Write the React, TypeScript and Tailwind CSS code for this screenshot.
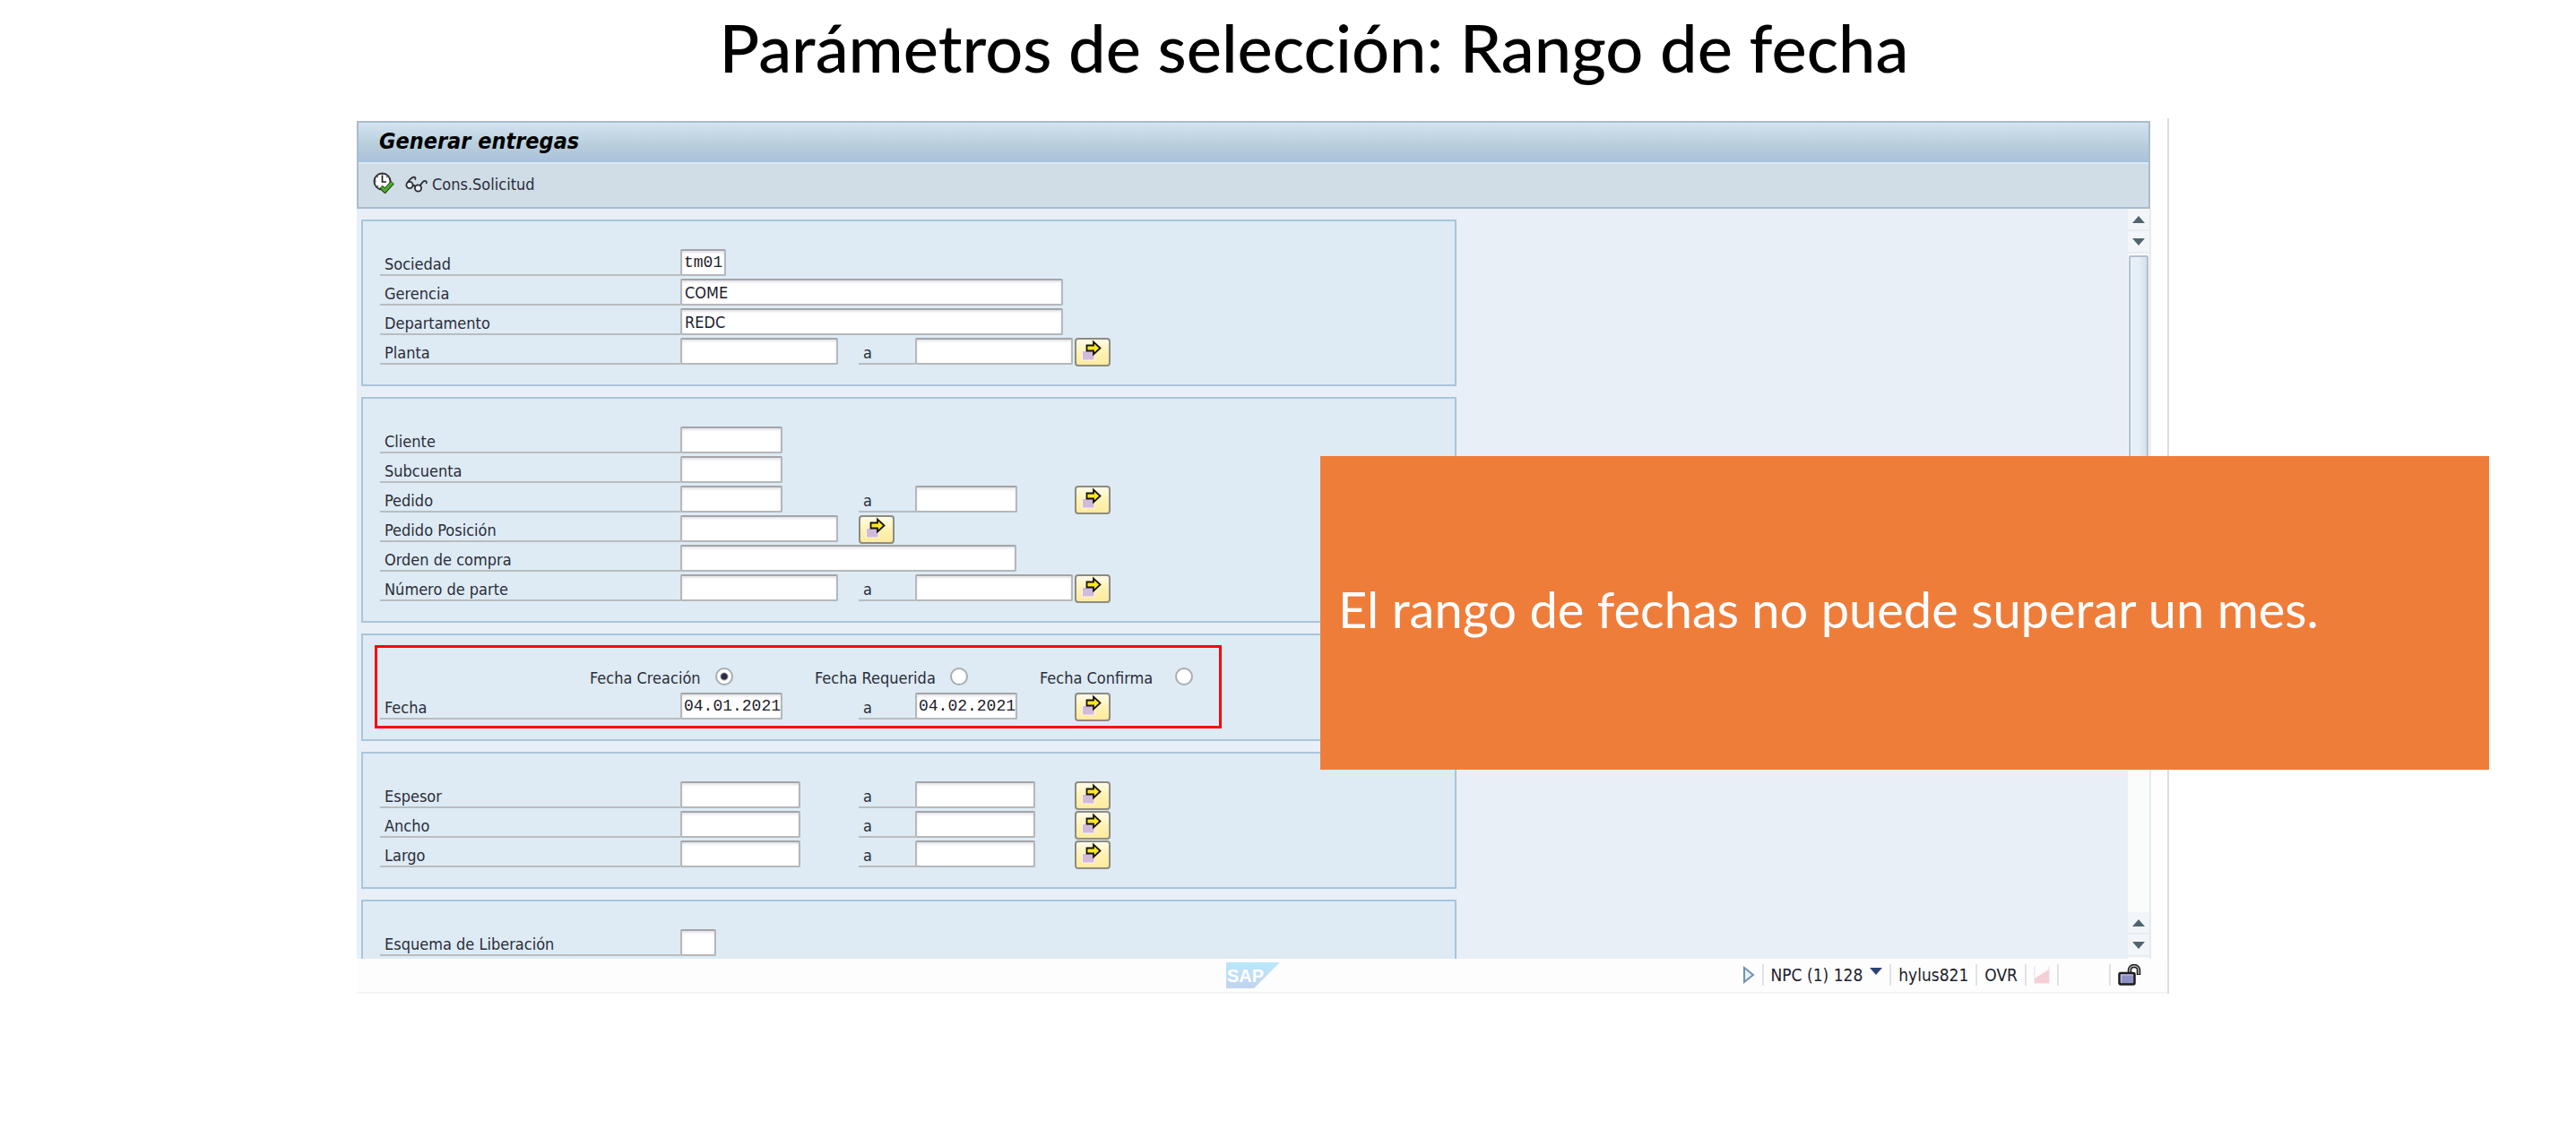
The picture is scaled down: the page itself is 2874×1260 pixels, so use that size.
import type { ReactNode } from "react";

function MultiSelectButton({ label }: { label: string }) {
  return (
    <button
      type="button"
      aria-label={`Selección múltiple ${label}`}
      className="flex h-8 w-10 items-center justify-center rounded-[4px] border-2 border-[#8d8b80] bg-linear-to-b from-[#fffbe8] via-[#fff1b4] to-[#fdeb9c]"
    >
      <svg viewBox="2 3 36 28" className="h-7 w-9" aria-hidden="true">
        <rect x="8" y="15.5" width="14.5" height="11" fill="#fbf5f4" />
        <rect x="9" y="16" width="12.5" height="9.5" fill="#d2badb" />
        <path
          d="M13.5 9.5h7.5V5.5l7.5 7-7.5 7v-4h-7.5z"
          fill="#fde725"
          stroke="#14130c"
          strokeWidth="1.8"
          strokeLinejoin="miter"
        />
      </svg>
    </button>
  );
}

type FieldProps = { label: string; width: string; value?: string; mono?: boolean };

function Field({ label, width, value = "", mono = false }: FieldProps) {
  return (
    <input
      type="text"
      aria-label={label}
      defaultValue={value}
      className={`h-[30px] rounded-[2px] border-2 border-[#b5b8bb] border-t-[#a3a5a9] bg-white text-lg text-[#20202c] shadow-[inset_0_2px_3px_#e4e4e8] outline-none ${
        mono ? "pl-0.5 font-['Liberation_Mono',monospace]" : "px-[3px]"
      } ${width}`}
    />
  );
}

function Row({ label, children }: { label: string; children: ReactNode }) {
  return (
    <div className="grid h-[33px] grid-cols-[335px_199px_63px_178px_auto] items-start justify-start">
      <span className="h-[30px] border-b-2 border-[#b9bdc0] pl-[5px] leading-[33px]">{label}</span>
      {children}
    </div>
  );
}

function To() {
  return <span className="h-[30px] border-b-2 border-[#b9bdc0] pl-[5px] leading-[33px]">a</span>;
}

function RangeRow({
  label,
  width,
  from = "",
  to = "",
}: {
  label: string;
  width: string;
  from?: string;
  to?: string;
}) {
  return (
    <Row label={label}>
      <Field label={`${label} desde`} width={width} value={from} mono />
      <To />
      <Field label={`${label} hasta`} width={width} value={to} mono />
      <MultiSelectButton label={label} />
    </Row>
  );
}

function Group({ children, open = false }: { children: ReactNode; open?: boolean }) {
  return (
    <section
      className={`relative w-[62%] border-2 border-[#a9c5dc] bg-[#deebf4] pt-[31px] pl-[19px] ${
        open ? "border-b-0" : "pb-[19px]"
      }`}
    >
      {children}
    </section>
  );
}

function DateRadio({
  label,
  id,
  textWidth,
  checked = false,
}: {
  label: string;
  id: string;
  textWidth: string;
  checked?: boolean;
}) {
  return (
    <div className="flex w-[251px] items-start">
      <label htmlFor={id} className={`leading-[33px] ${textWidth}`}>
        {label}
      </label>
      <input
        id={id}
        type="radio"
        name="tipo-fecha"
        defaultChecked={checked}
        className="mt-[5px] size-5 appearance-none rounded-full border-2 border-[#a9adb0] bg-white checked:bg-[radial-gradient(circle,#2a2d40_0_3px,#ffffff_5px)]"
      />
    </div>
  );
}

function ScrollArrow({ up = false, label }: { up?: boolean; label: string }) {
  return (
    <button
      type="button"
      aria-label={label}
      className="flex h-[25px] w-full items-center justify-center border-b-2 border-[#e9edf1] bg-[#f3f6f9]"
    >
      <svg viewBox="0 0 14 8" className="h-2 w-3.5" aria-hidden="true">
        <path d={up ? "M7 0l7 8H0z" : "M0 0h14L7 8z"} fill="#50656f" />
      </svg>
    </button>
  );
}

function Separator() {
  return <span className="h-6 w-0.5 bg-[#dfe3e8]" />;
}

function TitleBar() {
  return (
    <header className="mr-[19px] border-2 border-[#a9bccd]">
      <div className="h-[46px] border-b-2 border-[#dce8f1] bg-linear-to-b from-[#d3e3f0] via-[#b7cddb] via-60% to-[#a9c1dc] pl-[23px]">
        <h2 className="text-[25px] leading-[41px] font-bold text-black italic">Generar entregas</h2>
      </div>
      <div className="flex h-12 items-start bg-[#d0dde7] pt-[9px] pl-4">
        <button type="button" aria-label="Ejecutar">
          <svg viewBox="0 0 24 24" className="size-6" aria-hidden="true">
            <circle cx="10.5" cy="10.5" r="9" fill="#fff" stroke="#33363a" strokeWidth="2" />
            <path
              d="M10.5 4v7h4.5M10.5 2.5v1M10.5 17.5v1M2.5 10.5h1M5 5l.7.7M16 5l-.7.7M5 16l.7-.7"
              fill="none"
              stroke="#222"
              strokeWidth="1.7"
            />
            <path d="M9 16.5l4.500 4.500L22 11.500" fill="none" stroke="#24511a" strokeWidth="5" />
            <path d="M9.700 17l3.800 3.700L21.500 12" fill="none" stroke="#4fae2e" strokeWidth="3" />
          </svg>
        </button>
        <button type="button" className="ml-3 flex items-center gap-1 text-lg leading-7">
          <svg viewBox="0 0 26 20" className="h-5 w-[26px]" aria-hidden="true">
            <g fill="none" stroke="#2b2e33" strokeWidth="1.8" strokeLinecap="round">
              <circle cx="5" cy="10.500" r="3.600" fill="#eef3f7" />
              <circle cx="14.500" cy="14" r="3.600" fill="#eef3f7" />
              <path d="M8.500 11.500c1-1 2-.6 2.600.6M3 7.300C5 4.500 7 2 9.600 1.600c1.600-.2 2.200 1 1.700 2.400M17 11c1.500-2.500 2.500-5 4.800-5.200 1.700-.1 2.400 1 2 2.600" />
            </g>
          </svg>
          Cons.Solicitud
        </button>
      </div>
    </header>
  );
}

function StatusBar() {
  return (
    <footer className="flex h-[39px] items-center border-b-2 border-[#f3f4f7] bg-[#fdfdfd] pr-[29px] pl-[48%] text-[19px] text-[#20202c]">
      <svg viewBox="0 0 60 29" className="h-[29px] w-[60px]" role="img" aria-label="SAP">
        <defs>
          <linearGradient id="sap" x1="0" y1="0" x2="0" y2="1">
            <stop offset="0" stopColor="#b9e8fa" />
            <stop offset="1" stopColor="#c3d3ee" />
          </linearGradient>
        </defs>
        <path d="M0 0h60L31 29H0z" fill="url(#sap)" />
        <text
          x="1"
          y="22"
          fontFamily="Liberation Sans, sans-serif"
          fontWeight="700"
          fontSize="20"
          fill="#fff"
        >
          SAP
        </text>
      </svg>
      <div className="ml-auto flex items-center">
        <button type="button" aria-label="Mostrar estado" className="mr-2">
          <svg viewBox="0 0 14 20" className="h-5 w-3.5" aria-hidden="true">
            <path d="M2 2l10 8-10 8z" fill="#e6f0f8" stroke="#7391ad" strokeWidth="2" />
          </svg>
        </button>
        <Separator />
        <button type="button" className="mx-2 flex items-center gap-2">
          NPC (1) 128
          <svg viewBox="0 0 14 8" className="mb-2 h-2 w-3.5" aria-hidden="true">
            <path d="M0 0h14L7 8z" fill="#2d4478" />
          </svg>
        </button>
        <Separator />
        <span className="mx-2">hylus821</span>
        <Separator />
        <span className="mx-2">OVR</span>
        <Separator />
        <svg viewBox="0 0 18 20" className="mx-2 h-5 w-[18px]" aria-hidden="true">
          <path d="M0 0h2v14L16 4V0h2v20H0z" fill="#f1edf0" />
          <path d="M1 14L17 4v15H1z" fill="#f6cfd6" />
        </svg>
        <Separator />
        <span className="w-14" />
        <Separator />
        <svg viewBox="0 0 26 24" className="ml-2 h-6 w-[26px]" aria-hidden="true">
          <path d="M13 10V6.500a5 4.500 0 0 1 10 0V12" fill="none" stroke="#1d1d1d" strokeWidth="4.500" />
          <path d="M13 10V6.500a5 4.500 0 0 1 10 0V11" fill="none" stroke="#bdbdb8" strokeWidth="1.500" />
          <rect
            x="1.500"
            y="10"
            width="17"
            height="12.500"
            rx="1.500"
            fill="#8f90c6"
            stroke="#1d1d1d"
            strokeWidth="2.500"
          />
          <path d="M3.500 20.500V12h13" fill="none" stroke="#c6c7e8" strokeWidth="1.200" />
        </svg>
      </div>
    </footer>
  );
}

export default function App() {
  return (
    <div className="bg-white font-['Lato',sans-serif]">
      <h1 className="mb-[26px] pl-[58px] text-center text-[74px] leading-[106px] font-medium text-black">
        Parámetros de selección: Rango de fecha
      </h1>

      <main className="relative pr-[454px] pl-[398px]">
        <div className="border-r-2 border-[#d8dfe6] bg-[#fefefe] pt-[3px] font-['DejaVu_Sans_Condensed','DejaVu_Sans',sans-serif] text-lg text-[#2b2d3a]">
          <TitleBar />

          <div className="mr-[18px] flex bg-[#e8eff7]">
            <div className="flex grow flex-col gap-3 pt-3 pl-[5px]">
              <Group>
                <Row label="Sociedad">
                  <Field label="Sociedad" width="w-[51px]" value="tm01" mono />
                </Row>
                <Row label="Gerencia">
                  <Field label="Gerencia" width="w-[427px]" value="COME" />
                </Row>
                <Row label="Departamento">
                  <Field label="Departamento" width="w-[427px]" value="REDC" />
                </Row>
                <RangeRow label="Planta" width="w-[176px]" />
              </Group>

              <Group>
                <Row label="Cliente">
                  <Field label="Cliente" width="w-[114px]" />
                </Row>
                <Row label="Subcuenta">
                  <Field label="Subcuenta" width="w-[114px]" />
                </Row>
                <RangeRow label="Pedido" width="w-[114px]" />
                <Row label="Pedido Posición">
                  <Field label="Pedido Posición" width="w-[176px]" />
                  <MultiSelectButton label="Pedido Posición" />
                </Row>
                <Row label="Orden de compra">
                  <Field label="Orden de compra" width="w-[375px]" />
                </Row>
                <RangeRow label="Número de parte" width="w-[176px]" />
              </Group>

              <Group>
                <div className="pointer-events-none absolute top-[11px] left-[13px] h-[93px] w-[945px] border-[3px] border-[#fb0207]" />
                <div className="flex h-[33px] pl-[234px]">
                  <DateRadio id="fecha-creacion" label="Fecha Creación" textWidth="w-[140px]" checked />
                  <DateRadio id="fecha-requerida" label="Fecha Requerida" textWidth="w-[151px]" />
                  <DateRadio id="fecha-confirma" label="Fecha Confirma" textWidth="w-[151px]" />
                </div>
                <RangeRow label="Fecha" width="w-[114px]" from="04.01.2021" to="04.02.2021" />
              </Group>

              <Group>
                <RangeRow label="Espesor" width="w-[134px]" />
                <RangeRow label="Ancho" width="w-[134px]" />
                <RangeRow label="Largo" width="w-[134px]" />
              </Group>

              <Group open>
                <Row label="Esquema de Liberación">
                  <Field label="Esquema de Liberación" width="w-10" />
                </Row>
              </Group>
            </div>

            <div className="flex w-[26px] flex-col border-r-2 border-[#e6eaf0] bg-[#fafcfc] pb-0.5">
              <ScrollArrow up label="Inicio" />
              <ScrollArrow label="Bajar" />
              <div className="mx-px mt-0.5 h-[400px] rounded-[2px] border-2 border-[#b1c0ce] bg-linear-to-r from-[#e7eff6] from-50% to-[#d3e0e9]" />
              <div className="grow" />
              <ScrollArrow up label="Subir" />
              <ScrollArrow label="Fin" />
            </div>
          </div>

          <StatusBar />
        </div>

        <aside className="absolute top-[377px] right-[97px] flex h-[350px] w-[1304px] items-center bg-[#ef7d3a] pb-2 pl-5">
          <p className="text-[56px] text-white">El rango de fechas no puede superar un mes.</p>
        </aside>
      </main>
    </div>
  );
}
